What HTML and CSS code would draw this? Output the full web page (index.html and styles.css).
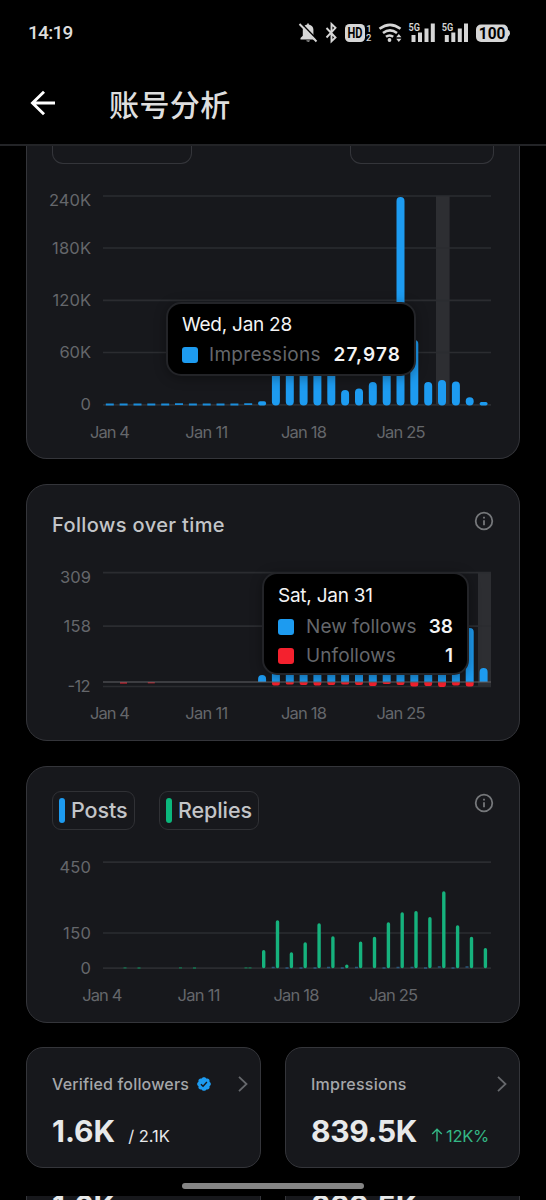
FILE: index.html
```html
<!DOCTYPE html>
<html lang="zh-CN">
<head>
<meta charset="utf-8">
<title>账号分析</title>
<link rel="stylesheet" href="styles.css">
</head>
<body>
<div class="status">
  <span class="clock">14:19</span>
  <svg class="status-icons" viewBox="296 18 218 30" width="218" height="30">
    <g fill="#d6d6d6">
      <path d="M300.500 39.500v-1.600l2.300-2.200v-6.200c0-2.800 2.200-4.600 4.400-5v-.9h1.600v.9c2.800.5 4.600 2.400 4.600 5v6.200l2.300 2.200v1.600zM306.300 40.600h3.600c-.4 1.600-3.200 1.600-3.600 0z"/>
      <path d="M301 23l17 17.500" stroke="#000" stroke-width="1.600"/>
      <path d="M299.500 24l17 17.500" stroke="#d6d6d6" stroke-width="1.900"/>
      <path d="M326.500 28l9 9.500-4 3.800V24l4 3.800-9 9.700" fill="none" stroke="#d6d6d6" stroke-width="1.900"/>
      <rect x="345" y="24" width="20" height="18" rx="4.500"/>
      <text x="347.500" y="37.800" textLength="15" lengthAdjust="spacingAndGlyphs" class="hd">HD</text>
      <text x="366.300" y="32" class="sim">1</text><text x="366" y="40.800" class="sim">2</text>
      <g fill="none" stroke="#d6d6d6" stroke-width="2.600">
        <path d="M379.500 28.800q10.500-8 21 0M383 33q7-5.200 14 0M386 36.800q3.500-2.600 7.200 0"/>
      </g>
      <circle cx="389.500" cy="40" r="1.900"/>
      <path d="M396.200 37.300l2.600-3.200 2.600 3.200zM396.200 38.700l2.600 3.200 2.600-3.200z"/>
      <path d="M411.500 35h4v7h-4zM418 32.500h4v9.500h-4zM424.500 28.500h4v13.500h-4zM430.800 23.500h4v18.500h-4z"/>
      <path d="M444.800 35h4v7h-4zM451.300 32.500h4v9.500h-4zM457.800 28.500h4v13.500h-4zM464 23.500h4v18.500h-4z"/>
      <text x="408.500" y="31" textLength="11.500" lengthAdjust="spacingAndGlyphs" class="net">5G</text>
      <text x="441.800" y="31" textLength="11.500" lengthAdjust="spacingAndGlyphs" class="net">5G</text>
      <rect x="476" y="24.500" width="32" height="17.500" rx="5"/>
      <path d="M507 29.500q3 .8 3 3.700t-3 3.700z"/>
      <text x="478.800" y="38.800" textLength="26.500" lengthAdjust="spacingAndGlyphs" class="batt">100</text>
    </g>
  </svg>
</div>
<header class="topbar">
  <svg class="back" viewBox="0 0 26 26" width="26" height="26"><path d="M25 13H2.500M14 1.800L2.500 13l11.500 11.200" fill="none" stroke="#fff" stroke-width="2.900"/></svg>
  <h1 class="title">账号分析</h1>
</header>
<main class="content">
  <section class="card card-top">
    <div class="selects"><span class="select"></span><span class="select select-right"></span></div>
    <svg class="chart" viewBox="27 180 492 278" width="492" height="278">
      <rect x="436" y="196" width="13.600" height="208.500" class="hover"/>
      <path class="grid" d="M103 196H491M103 248H491M103 300.300H491M103 352.500H491M103 404.800H491"/>
      <path class="dash" d="M105.800 404.500h8M119.600 404.500h8M133.500 404.500h8M147.300 404.500h8M161.200 404.500h8M175 404.200h8M188.900 404.500h8M202.700 404.500h8M216.500 404.500h8M230.400 404.500h8M244.200 404.200h8"/>
      <rect x="258.100" y="401.300" width="8" height="4.200" rx="2" fill="#1d9bf0"/>
      <rect x="479.600" y="402" width="8" height="3.500" rx="1.800" fill="#1d9bf0"/>
      <path class="bar" d="M275.900 401.500V360M289.800 401.500V360M303.600 401.500V360M317.400 401.500V360M331.300 401.500V360M345.100 401.500V394M359 401.500V392.500M372.800 401.500V386M386.700 401.500V360M400.500 401.500V201M414.300 401.500V344M428.200 401.500V386M442 401.500V384M455.900 401.500V385.500M469.700 401.400V401.300"/>
      <g class="axis">
        <text x="49" y="206.200" textLength="42">240K</text>
        <text x="52" y="253.800" textLength="39">180K</text>
        <text x="52.500" y="306" textLength="38.500">120K</text>
        <text x="59.500" y="358.200" textLength="31.500">60K</text>
        <text x="80.500" y="410.400" textLength="10">0</text>
        <text x="90" y="438" textLength="40">Jan 4</text>
        <text x="185.300" y="438" textLength="43">Jan 11</text>
        <text x="281" y="438" textLength="46">Jan 18</text>
        <text x="376.500" y="438" textLength="49">Jan 25</text>
      </g>
    </svg>
    <div class="tooltip tip-impressions">
      <div class="tip-date">Wed, Jan 28</div>
      <div class="tip-row"><i class="swatch blue"></i><span class="tip-label">Impressions</span><b>27,978</b></div>
    </div>
  </section>

  <section class="card">
    <div class="card-head head-follows">
      <h2 class="card-title">Follows over time</h2>
      <svg class="info" viewBox="0 0 20 20" width="20" height="20"><circle cx="10" cy="10" r="8.300"/><path d="M10 9.300v5M10 5.800v1.800"/></svg>
    </div>
    <svg class="chart" viewBox="27 550 492 190" width="492" height="190">
      <rect x="478" y="572" width="13" height="115" class="hover"/>
      <path class="grid" d="M103 572.700H491M103 626.200H491M103 686.500H491"/>
      <path fill="#1d9bf0" d="M258.100 682v-3a4 4 0 0 1 8 0v3zM271.900 682v-20h8v20zM285.800 682v-20h8v20zM299.600 682v-20h8v20zM313.400 682v-20h8v20zM327.300 682v-20h8v20zM341.100 682v-20h8v20zM355 682v-20h8v20zM368.800 682v-20h8v20zM382.700 682v-20h8v20zM396.500 682v-20h8v20zM410.300 682v-20h8v20zM424.200 682v-20h8v20zM438 682V576q0-4 4-4t4 4V682zM451.900 682v-20h8v20zM465.700 682V632a4 4 0 0 1 8 0V682zM479.600 682v-10a4 4 0 0 1 8 0v10z"/>
      <g fill="#f4212e">
        <path d="M120 682.200h7v1.300h-7zM147.800 682.200h7v1h-7z"/>
        <path d="M271.900 682h8v1q0 2.500-2 2.500h-4q-2 0-2-2.500zM285.800 682h8v1q0 1.500-2 1.500h-4q-2 0-2-1.500zM299.600 682h8v1q0 2-2 2h-4q-2 0-2-2zM313.400 682h8v1q0 2.500-2 2.500h-4q-2 0-2-2.500zM327.300 682h8v1q0 2-2 2h-4q-2 0-2-2zM341.100 682h8v1q0 1.500-2 1.500h-4q-2 0-2-1.500zM355 682h8v1q0 2-2 2h-4q-2 0-2-2zM368.800 682h8v1q0 3-2 3h-4q-2 0-2-3zM382.700 682h8v1q0 1-2 1h-4q-2 0-2-1zM396.500 682h8v1q0 2-2 2h-4q-2 0-2-2zM410.300 682h8v2q0 2.500-2.500 2.500h-3q-2.500 0-2.500-2.500zM424.200 682h8v1q0 3-2 3h-4q-2 0-2-3zM438 682h8v2q0 3-2.500 3h-3q-2.500 0-2.500-3zM451.900 682h8v1q0 2.500-2 2.500h-4q-2 0-2-2.500zM465.700 682h8v2q0 2.500-2.500 2.500h-3q-2.500 0-2.500-2.500z"/>
      </g>
      <path class="zero" d="M103 682H491"/>
      <g class="axis">
        <text x="60" y="583.200" textLength="31">309</text>
        <text x="63.500" y="632.300" textLength="27.500">158</text>
        <text x="67.500" y="692.300" textLength="23">-12</text>
        <text x="90" y="719" textLength="40">Jan 4</text>
        <text x="185.300" y="719" textLength="43">Jan 11</text>
        <text x="281" y="719" textLength="46">Jan 18</text>
        <text x="376.500" y="719" textLength="49">Jan 25</text>
      </g>
    </svg>
    <div class="tooltip tip-follows">
      <div class="tip-date">Sat, Jan 31</div>
      <div class="tip-row"><i class="swatch blue"></i><span class="tip-label">New follows</span><b>38</b></div>
      <div class="tip-row"><i class="swatch red"></i><span class="tip-label">Unfollows</span><b>1</b></div>
    </div>
  </section>

  <section class="card card-posts">
    <div class="card-head head-posts">
      <div class="chips">
        <span class="chip"><i class="mark blue"></i><span class="chip-text">Posts</span></span>
        <span class="chip chip-replies"><i class="mark green"></i><span class="chip-text">Replies</span></span>
      </div>
      <svg class="info" viewBox="0 0 20 20" width="20" height="20"><circle cx="10" cy="10" r="8.300"/><path d="M10 9.300v5M10 5.800v1.800"/></svg>
    </div>
    <svg class="chart" viewBox="27 840 492 182" width="492" height="182">
      <path class="grid" d="M103 862.200H491M103 933H491M103 968.200H491"/>
      <path class="green-dash" d="M123.500 967.800h3M137.500 968h3M179 967.800h3M193 968h3M244.500 967.800h3M248.500 967.800h3"/>
      <path class="blue-dash" d="M271.700 967.500h3M285.500 968h3M299.500 968h3M313.500 968h3M327 967.500h3M340.800 968h3M355 967.500h3M382.500 968h3M396.500 967.500h3M410.500 967.500h3M424 968h3M437.800 967h3M451.500 968h3M465.500 967h3"/>
      <path class="green-bar" d="M263.700 966.500V951.700M277.500 966.500V922M291.400 966.500V954M305.200 966.500V944M319.100 966.500V925M332.900 966.500V938M346.800 966.500V966.200M360.600 966.500V943.200M374.500 966.500V938.500M388.400 966.500V924M402.200 966.500V914M416 966.500V912.700M429.900 966.500V918.700M443.800 966.500V893M457.600 966.500V927M471.500 966.500V938.500M485.400 966.500V949.700"/>
      <g class="axis">
        <text x="59.500" y="873" textLength="31.500">450</text>
        <text x="63" y="939" textLength="28">150</text>
        <text x="80.500" y="974.300" textLength="10">0</text>
        <text x="82.300" y="1001.300" textLength="40">Jan 4</text>
        <text x="177.500" y="1001.300" textLength="43">Jan 11</text>
        <text x="273.500" y="1001.300" textLength="46">Jan 18</text>
        <text x="369" y="1001.300" textLength="49">Jan 25</text>
      </g>
    </svg>
  </section>

  <div class="stats">
    <section class="stat">
      <div class="stat-head">
        <span class="stat-name name-followers">Verified followers</span>
        <svg class="badge" viewBox="0 0 22 22" width="16" height="16"><path fill="#1d9bf0" d="M20.400 11c0-1.300-.7-2.500-1.900-3.100.4-1.300.2-2.700-.7-3.600-.9-.9-2.300-1.200-3.600-.7C13.600 2.300 12.300 1.600 11 1.600S8.400 2.300 7.800 3.600c-1.300-.5-2.700-.2-3.600.7-.9.900-1.100 2.300-.7 3.600C2.300 8.500 1.600 9.700 1.600 11s.7 2.500 1.900 3.100c-.4 1.300-.2 2.700.7 3.600.9.900 2.300 1.200 3.600.7.600 1.300 1.900 2 3.200 2s2.600-.7 3.200-2c1.300.5 2.700.2 3.600-.7.900-.9 1.100-2.300.7-3.600 1.200-.6 1.900-1.800 1.900-3.100z"/><path d="M6.800 11.300l2.900 2.900 5.300-6" fill="none" stroke="#17181c" stroke-width="1.900"/></svg>
        <svg class="chevron" viewBox="0 0 12 18" width="12" height="18"><path d="M2 1.800L9.500 9 2 16.200"/></svg>
      </div>
      <div class="stat-body"><strong class="num-followers">1.6K</strong><span class="total">/ 2.1K</span></div>
    </section>
    <section class="stat">
      <div class="stat-head">
        <span class="stat-name">Impressions</span>
        <svg class="chevron" viewBox="0 0 12 18" width="12" height="18"><path d="M2 1.800L9.500 9 2 16.200"/></svg>
      </div>
      <div class="stat-body"><strong class="num-impressions">839.5K</strong><span class="delta"><svg viewBox="0 0 12 14" width="12" height="14"><path d="M6 13.500V1.500M1.200 6L6 1.300 10.800 6" fill="none" stroke="#34b886" stroke-width="1.400"/></svg>12K%</span></div>
    </section>
  </div>
</main>
<div class="gesture"></div>
<div class="peek">
  <div class="peek-card"><strong class="num-followers">1.6K</strong></div>
  <div class="peek-card"><strong class="num-impressions">839.5K</strong></div>
</div>
</body>
</html>
```
FILE: styles.css
```css
* { box-sizing: border-box; }
body {
  margin: 0;
  width: 546px;
  height: 1200px;
  overflow: hidden;
  background: #000;
  color: #e7e9ea;
  font-family: Inter, "Noto Sans CJK SC", sans-serif;
  display: flex;
  flex-direction: column;
}
svg { display: block; flex: none; }
.status {
  height: 66px;
  padding: 0 32px 0 28px;
  display: flex;
  justify-content: space-between;
  align-items: center;
  flex: none;
}
.clock { margin-top: -2px; font: 500 19px Roboto, sans-serif; letter-spacing: -0.7px; color: #ddd; }
.hd { font: 700 14px Roboto, sans-serif; fill: #000; }
.sim { font: 500 9.5px Roboto, sans-serif; }
.net { font: 600 10px Roboto, sans-serif; }
.batt { font: 700 16px Roboto, sans-serif; fill: #000; }
.topbar {
  height: 80px;
  flex: none;
  border-bottom: 2px solid #232427;
  padding: 0 30px;
  display: flex;
  align-items: center;
  gap: 53px;
}
.back { margin-top: -4px; }
.title {
  margin: -4px 0 0;
  font: 500 30px/40px "Noto Sans CJK SC", sans-serif;
  letter-spacing: 0.4px;
  color: #dedede;
}
.content {
  padding: 0 26px;
  display: flex;
  flex-direction: column;
  flex: none;
}
.card {
  position: relative;
  width: 494px;
  height: 257px;
  margin-bottom: 25px;
  border: 1px solid #34353a;
  border-radius: 21px;
  background: #17181c;
  overflow: hidden;
  display: flex;
  flex-direction: column;
}
.card-top { height: 313px; border-top: 0; border-radius: 0 0 21px 21px; }
.card-posts { margin-bottom: 24px; }
.selects {
  height: 34px;
  padding: 0 25px;
  display: flex;
  justify-content: space-between;
  align-items: flex-start;
}
.select {
  width: 140px;
  height: 18px;
  border: 1px solid #34353a;
  border-top: 0;
  border-radius: 0 0 11px 11px;
}
.select-right { width: 144px; }
.chart { flex: none; }
.hover { fill: #2d2e32; }
.grid { fill: none; stroke: #2b2c30; stroke-width: 1.7; }
.zero { fill: none; stroke: #65666a; stroke-opacity: 0.65; stroke-width: 1.5; }
.dash { stroke: #1b8ddb; stroke-width: 1.8; }
.bar { fill: none; stroke: #1d9bf0; stroke-width: 8; stroke-linecap: round; }
.green-bar { fill: none; stroke: #16b27d; stroke-width: 3.4; stroke-linecap: round; }
.green-dash { stroke: #12744f; stroke-width: 1.3; }
.blue-dash { stroke: #2a587d; stroke-width: 1.3; }
.axis text { font: 400 16.5px Inter, sans-serif; fill: #65676b; }
.tooltip {
  position: absolute;
  background: #000;
  border: 2px solid #232428;
  border-radius: 15px;
  box-shadow: 0 2px 12px rgba(0, 0, 0, 0.35);
  color: #f4f4f4;
}
.tip-impressions { left: 139px; top: 156px; width: 250px; height: 74px; padding: 6px 14px 0; }
.tip-follows { left: 235px; top: 87px; width: 207px; height: 103px; padding: 7px 14px 0; }
.tip-date { height: 30px; line-height: 30px; font-size: 19px; letter-spacing: -0.25px; }
.tip-row { height: 29px; display: flex; align-items: center; }
.tip-impressions .tip-row { height: 29px; }
.tip-follows .tip-date { height: 31px; }
.tip-label { margin-left: 12px; color: #65676b; font-size: 19px; letter-spacing: 0.1px; }
.tip-impressions .tip-label { margin-left: 11px; letter-spacing: 0.3px; }
.tip-row b { margin-left: auto; font-weight: 600; font-size: 19px; }
.tip-impressions b { letter-spacing: 1.1px; margin-right: -1px; }
.swatch { width: 16px; height: 16px; border-radius: 3px; flex: none; }
.blue { background: #1d9bf0; }
.red { background: #f4212e; }
.green { background: #0bb77c; }
.card-head { display: flex; justify-content: space-between; align-items: flex-start; padding: 0 25px; flex: none; }
.head-follows { height: 65px; padding-top: 26px; }
.head-posts { height: 73px; padding-top: 24px; }
.card-title { margin: 0; font-size: 20px; line-height: 28px; font-weight: 500; color: #c3c5c8; letter-spacing: 0.37px; }
.info { fill: none; stroke: #75777a; stroke-width: 1.8; }
.head-posts .info { margin-top: 2px; }
.chips { display: flex; gap: 25px; }
.chip {
  width: 83px;
  height: 39px;
  padding-left: 6px;
  border: 1px solid #303135;
  border-radius: 9px;
  display: flex;
  align-items: center;
  gap: 6px;
  color: #c3c5c8;
  font-size: 21.5px;
  font-weight: 500;
  letter-spacing: -0.1px;
}
.chip-text { margin-top: -2px; }
.chip-replies { width: 100px; margin-left: -1px; }
.mark { width: 6px; height: 25px; border-radius: 3px; flex: none; }
.stats { display: flex; gap: 24px; }
.stat {
  width: 235px;
  height: 121px;
  border: 1px solid #34353a;
  border-radius: 17px;
  background: #17181c;
  padding: 24px 12px 0 25px;
}
.stat-head { display: flex; align-items: center; height: 24px; }
.stat-name { font-size: 16px; font-weight: 500; color: #a5a7aa; letter-spacing: 0.25px; }
.name-followers { letter-spacing: 0.17px; }
.badge { margin-left: 7px; }
.chevron { margin-left: auto; fill: none; stroke: #66686c; stroke-width: 1.8; }
.stat:first-child .chevron { margin-right: -1px; }
.stat:last-child .chevron { margin-right: -1px; }
.stat-body { display: flex; align-items: baseline; height: 40px; margin-top: 17px; }
strong { font-size: 30px; line-height: 36px; font-weight: 700; color: #e7e9ea; }
.num-impressions { letter-spacing: -0.35px; }
.total { margin-left: 13px; font-size: 16.5px; }
.delta { margin-left: 14px; display: inline-flex; align-items: baseline; gap: 3px; color: #34b886; font-size: 16.5px; letter-spacing: -0.3px; }
.gesture { flex: none; width: 182px; height: 6px; margin: 15px 0 7px 182px; border-radius: 3px; background: #858585; }
.peek { height: 5px; flex: none; display: flex; gap: 24px; padding: 0 26px; overflow: hidden; }
.peek-card { width: 235px; height: 40px; flex: none; padding-left: 25px; background: #17181c; border: 1px solid #34353a; border-width: 0 1px; }
.peek-card strong { display: block; margin-top: -8px; }
```
